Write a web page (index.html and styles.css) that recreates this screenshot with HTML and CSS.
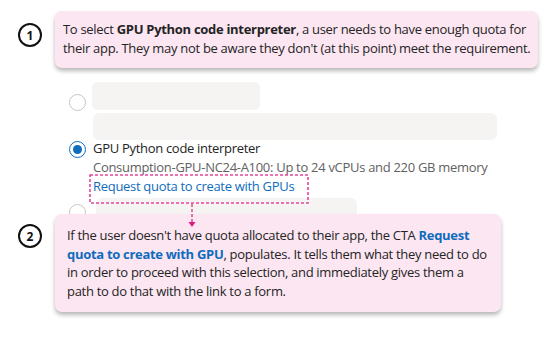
FILE: index.html
```html
<!DOCTYPE html>
<html>
<head>
  <title>GPU quota annotation</title>
  <link rel="stylesheet" href="styles.css">
</head>
<body>
  <div class="page">
    <div class="note note-first">
      <div class="step">1</div>
      <div class="callout">
        To select <b>GPU Python code interpreter</b>, a user needs to have enough quota for<br>
        their app. They may not be aware they don't (at this point) meet the requirement.
      </div>
    </div>

    <div class="options">
      <div class="option">
        <span class="radio radio-first"></span>
        <div>
          <div class="skeleton skel-short"></div>
          <div class="skeleton skel-long"></div>
        </div>
      </div>

      <div class="option option-selected">
        <span class="radio checked"></span>
        <div class="option-text">
          <div class="option-title">GPU Python code interpreter</div>
          <div class="option-desc">Consumption-GPU-NC24-A100: Up to 24 vCPUs and 220 GB memory</div>
          <a class="cta" href="#">Request quota to create with GPUs</a>
        </div>
      </div>

      <div class="option option-last">
        <span class="radio radio-last"></span>
        <div>
          <div class="skeleton skel-mid"></div>
        </div>
      </div>
    </div>

    <div class="note note-second">
      <div class="step">2</div>
      <div class="callout">
        If the user doesn't have quota allocated to their app, the CTA <b class="blue">Request</b><br>
        <b class="blue">quota to create with GPU</b>, populates. It tells them what they need to do<br>
        in order to proceed with this selection, and immediately gives them a<br>
        path to do that with the link to a form.
      </div>
    </div>

    <!-- dashed highlight + connector arrow, drawn over the form and callout -->
    <svg class="marker" width="224" height="60" viewBox="0 0 224 60">
      <rect x="2" y="2" width="218" height="28" fill="none" stroke="#e8479c" stroke-width="1.6" stroke-dasharray="3 2"/>
      <line x1="104" y1="31" x2="104" y2="50" stroke="#d81b83" stroke-width="1.2" stroke-dasharray="3 2"/>
      <path d="M100.5 49 L107.5 49 L104 54 Z" fill="#d81b83"/>
    </svg>
  </div>
</body>
</html>
```

FILE: styles.css
```css
body {
  margin: 0;
  background-color: white;
  font-family: "Open Sans", "Noto Sans", sans-serif;
  color: #242424;
}

.page {
  position: relative;
  width: 559px;
  height: 346px;
  overflow: hidden;
}

.note {
  display: flex;
  align-items: flex-start;
  position: relative;
  z-index: 1;
}

.note-first {
  padding-top: 11px;
}

.step {
  box-sizing: border-box;
  width: 24px;
  height: 24px;
  border: 2px solid #111;
  border-radius: 50%;
  margin-left: 18px;
  margin-right: 13px;
  display: flex;
  align-items: center;
  justify-content: center;
  font-size: 12px;
  font-weight: 700;
  color: #111;
}

.note-first .step {
  margin-top: 12px;
}

.note-second .step {
  margin-top: 10px;
}

.callout {
  box-sizing: border-box;
  background-color: #fce6f2;
  border-radius: 7px;
  box-shadow: 0 3px 4px rgba(0, 0, 0, 0.28);
  font-size: 13px;
  line-height: 19px;
  letter-spacing: -0.3px;
  white-space: nowrap;
}

.note-first .callout {
  width: 483px;
  height: 57px;
  padding: 9px 8px;
}

.note-second {
  margin-top: -12px;
}

.note-second .callout {
  width: 446px;
  height: 98px;
  padding: 12px 12px;
  line-height: 18.5px;
}

.blue {
  color: #0f6cbd;
}

.options {
  padding-left: 69px;
  margin-top: 14px;
}

.option {
  display: grid;
  grid-template-columns: 16px 1fr;
  column-gap: 7px;
  align-items: start;
}

.radio {
  box-sizing: border-box;
  width: 17px;
  height: 17px;
  border-radius: 50%;
  border: 1px solid #c8c6c4;
  background-color: white;
}

.radio-first {
  margin-top: 12px;
}

.checked {
  border-color: #0f6cbd;
  margin-top: 2px;
  display: flex;
  align-items: center;
  justify-content: center;
}

.checked::after {
  content: "";
  width: 9px;
  height: 9px;
  border-radius: 50%;
  background-color: #0f6cbd;
}

.skeleton {
  background-color: #f5f4f3;
  border-radius: 6px;
}

.skel-short {
  width: 168px;
  height: 28px;
}

.skel-long {
  width: 404px;
  height: 27px;
  margin-top: 3px;
  margin-left: 1px;
}

.skel-mid {
  width: 261px;
  height: 28px;
  margin-left: 4px;
}

.option-selected {
  margin-top: -1px;
}

.option-text {
  font-size: 13px;
  line-height: 19px;
  padding-left: 1px;
  letter-spacing: -0.3px;
  white-space: nowrap;
}

.option-desc {
  color: #616161;
}

.cta {
  color: #0f6cbd;
  text-decoration: none;
}

.option-last {
  margin-top: 2px;
}

.radio-last {
  margin-top: 6px;
}

.marker {
  position: absolute;
  left: 88px;
  top: 173px;
  z-index: 2;
}
```
